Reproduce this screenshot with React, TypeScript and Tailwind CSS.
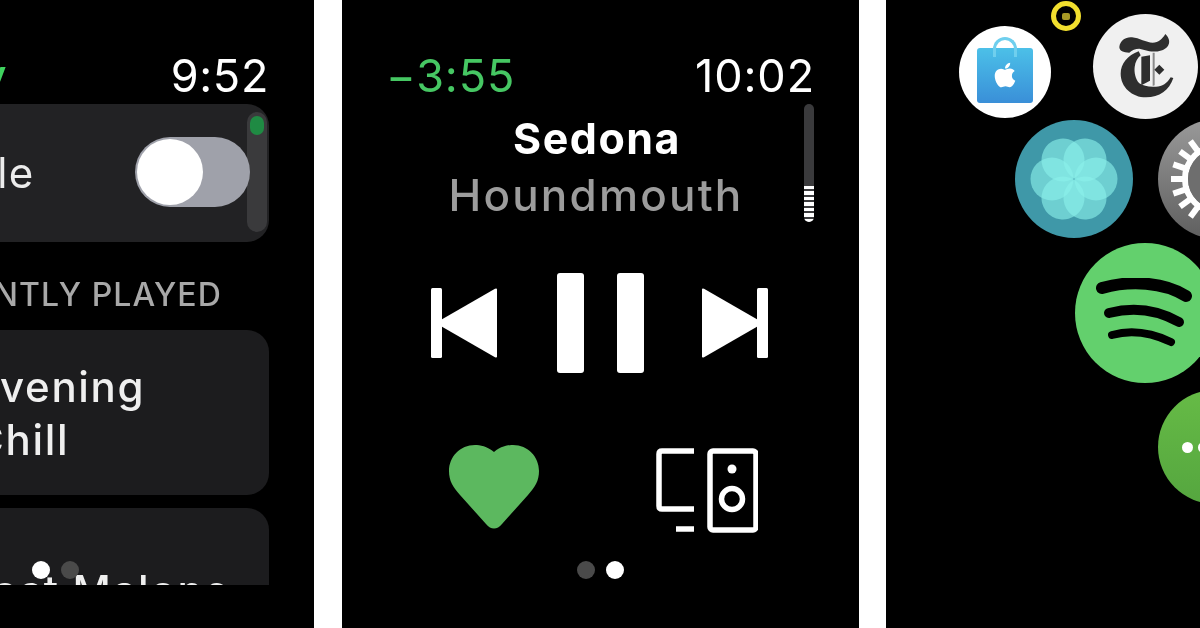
import { FaApple } from "react-icons/fa";

const font = "font-['Inter','Liberation_Sans',sans-serif]";

function PageDots({ active }: { active: 0 | 1 }) {
  return (
    <div className="flex items-center gap-[11px]">
      <span className={`h-[18px] w-[18px] rounded-full ${active === 0 ? "bg-white" : "bg-[#4a4a4a]"}`} />
      <span className={`h-[18px] w-[18px] rounded-full ${active === 1 ? "bg-white" : "bg-[#4a4a4a]"}`} />
    </div>
  );
}

function SpotifyHome() {
  return (
    <div className="relative h-full w-[314px] shrink-0 overflow-hidden bg-black">
      <div className="flex h-[585px] justify-end overflow-hidden pr-[45px]">
        <div className="flex w-[420px] shrink-0 flex-col pt-[47px]">
          <div className="flex h-[57px] shrink-0 items-start justify-between text-[45px] leading-[57px] tracking-[0.015em]">
            <span className="font-medium text-[#3fd35f]">Spotify</span>
            <span className="text-white">9:52</span>
          </div>
          <div className="relative flex h-[138px] shrink-0 items-center justify-between rounded-[22px] bg-[#222224] pb-[2px] pl-[36px] pr-[19px]">
            <span className="text-[42px] tracking-[0.03em] text-[#ececec]">Shuffle</span>
            <div className="relative z-10 h-[70px] w-[115px] rounded-full bg-[#9fa1aa]">
              <span className="absolute left-[2px] top-[2px] h-[66px] w-[66px] rounded-full bg-white" />
            </div>
            <div className="absolute right-[2px] top-[8px] h-[120px] w-[20px] rounded-full bg-[#3a3a3c]">
              <span className="absolute left-[3px] top-[4px] h-[19px] w-[14px] rounded-full bg-[#1f8a43]" />
            </div>
          </div>
          <div className="mt-[33px] h-[55px] shrink-0 whitespace-nowrap pr-[47px] text-right text-[32px] font-medium uppercase leading-[40px] tracking-[0.035em] text-[#a8a8a8]">
            Recently played
          </div>
          <div className="flex h-[165px] shrink-0 flex-col rounded-[22px] bg-[#1c1c1e] pl-[124px] pt-[30px] text-[42px] font-medium leading-[53px] tracking-[0.04em] text-[#efefef]">
            <span>Evening</span>
            <span>Chill</span>
          </div>
          <div className="mt-[13px] h-[130px] shrink-0 rounded-[22px] bg-[#1c1c1e] pl-[115px] pt-[56px] text-[42px] font-medium leading-[53px] tracking-[0.04em] text-[#efefef]">
            Post Malone
          </div>
        </div>
      </div>
      <div className="absolute left-[32px] top-[561px]">
        <PageDots active={0} />
      </div>
    </div>
  );
}

function NowPlaying() {
  return (
    <div className="relative flex h-full w-[517px] shrink-0 flex-col items-center bg-black pt-[47px]">
      <div className="flex h-[57px] w-full items-start justify-between pl-[44px] pr-[44px] text-[45px] leading-[57px] tracking-[0.02em]">
        <span className="text-[#46c763]">−3:55</span>
        <span className="text-white">10:02</span>
      </div>
      <div className="mt-[7px] pr-[7px] text-[43px] font-bold leading-[54px] tracking-[0.035em] text-white">Sedona</div>
      <div className="mt-[3px] pr-[9px] text-[44px] font-medium leading-[54px] tracking-[0.05em] text-[#9c9c9c]">Houndmouth</div>
      <div className="absolute right-[45px] top-[104px] flex h-[118px] w-[10px] flex-col justify-end gap-[2px] overflow-hidden rounded-full bg-[#3a3a3c]">
        {[0, 1, 2, 3, 4, 5, 6].map((i) => (
          <span key={i} className="h-[3.5px] w-full shrink-0 bg-white" />
        ))}
      </div>

      <div className="mt-[51px] flex h-[100px] items-center gap-[59px] pr-[3px]">
        <svg width="67" height="70" viewBox="0 0 67 70" fill="white">
          <rect x="0" y="0" width="11" height="70" rx="1.5" />
          <path d="M66 1.5 L66 68.5 Q66 70 64 69.2 L8 37 Q5 35 8 33 L64 .8 Q66 0 66 1.5Z" />
        </svg>
        <div className="flex h-[100px] gap-[33px]">
          <span className="h-full w-[27px] rounded-[3px] bg-white" />
          <span className="h-full w-[27px] rounded-[3px] bg-white" />
        </div>
        <svg className="-ml-[2px]" width="67" height="70" viewBox="0 0 67 70" fill="white">
          <rect x="56" y="0" width="11" height="70" rx="1.5" />
          <path d="M1 1.5 L1 68.5 Q1 70 3 69.2 L59 37 Q62 35 59 33 L3 .8 Q1 0 1 1.5Z" />
        </svg>
      </div>

      <div className="mt-[74px] flex h-[86px] items-start gap-[117px] pl-[6px]">
        <svg className="-mt-[2px]" width="90" height="84" viewBox="0 0 90 84" fill="#5cb85f">
          <path d="M45 7 C38 1 31 0 26 0 C11 0 0 12 0 26 C0 36 4 42 11 50 L37 79 C42 85 48 85 53 79 L79 50 C86 42 90 36 90 26 C90 12 79 0 64 0 C59 0 52 1 45 7Z" />
        </svg>
        <svg className="mt-[1px]" width="102" height="85" viewBox="0 0 102 85" fill="none" stroke="white" strokeWidth="5.5">
          <path d="M38 3 H6 Q3 3 3 6 V58 Q3 61 6 61 H38" />
          <path d="M20 81 H38" />
          <rect x="54" y="3" width="46" height="79" rx="3" />
          <circle cx="76" cy="21" r="4.500" fill="white" stroke="none" />
          <circle cx="76" cy="51" r="10.500" />
        </svg>
      </div>

      <div className="mt-[28px] pr-[1px]">
        <PageDots active={1} />
      </div>
    </div>
  );
}

function HomeScreen() {
  return (
    <div className="relative -ml-[1px] h-full w-[315px] shrink-0 overflow-hidden bg-black">
      {/* app bubbles, free placement on the honeycomb */}
      <div className="absolute left-[165px] top-[1px] flex h-[30px] w-[30px] items-center justify-center rounded-full border-[5px] border-[#f2df2e]">
        <span className="h-[7px] w-[8px] rounded-[2px] bg-[#a89a26]" />
      </div>

      <div className="absolute left-[73px] top-[26px] flex h-[92px] w-[92px] items-center justify-center rounded-full bg-white">
        <div className="relative mt-[6px] -ml-[1px] flex h-[55px] w-[56px] items-center justify-center rounded-[3px] bg-gradient-to-b from-[#4cc0e8] to-[#3a8fd8]">
          <span className="absolute left-[16px] top-[-11px] h-[20px] w-[24px] rounded-t-full border-[3px] border-b-0 border-[#6fcfee]" />
          <FaApple className="relative h-[28px] w-[28px] text-white" />
        </div>
      </div>

      <div className="absolute left-[207px] top-[14px] flex h-[105px] w-[105px] items-center justify-center rounded-full bg-[#f0f0f0]">
        <svg width="80" height="90" viewBox="0 0 240 270" fill="#2e2e2e">
          <path d="M40 75 C42 55 60 44 78 46 C100 48 120 62 140 62 C158 62 168 52 178 36 C190 48 194 62 184 74 C172 88 150 90 130 88 L100 80 C88 80 78 84 70 92 C52 92 40 86 40 75Z" />
          <path d="M98 88 C65 100 44 125 44 155 C44 195 78 226 120 226 C160 226 190 205 202 168 L194 166 C184 184 168 194 150 194 C130 196 112 192 100 184 C88 172 84 150 86 135 C88 120 94 108 104 100 Z" />
          <path d="M106 104 L132 100 L132 176 L106 190Z" />
          <path d="M140 92 L146 92 L146 190 L140 192Z" fill="#8a8a8a" />
          <path d="M160 128 L175 143 L160 158 L145 143Z" />
        </svg>
      </div>

      <div className="absolute left-[129px] top-[120px] flex h-[118px] w-[118px] items-center justify-center rounded-full bg-[#3f98a8]">
        <svg width="88" height="88" viewBox="-44 -44 88 88">
          {[0, 60, 120, 180, 240, 300].map((a) => (
            <circle key={a} cx="0" cy="-22" r="21.500" fill="#8af0ea" fillOpacity="0.62" transform={`rotate(${a + 30})`} />
          ))}
        </svg>
      </div>

      <div className="absolute left-[272px] top-[119px] flex h-[120px] w-[120px] items-center justify-center rounded-full bg-gradient-to-b from-[#9a9a9a] to-[#5f5f5f]">
        <svg width="100" height="100" viewBox="-50 -50 100 100">
          {Array.from({ length: 20 }, (_, i) => i * 18).map((a) => (
            <rect key={a} x="-3" y="-47" width="6" height="14" fill="white" transform={`rotate(${a})`} />
          ))}
          <circle r="33" fill="none" stroke="white" strokeWidth="6" />
          <circle r="30" fill="#6e6e6e" />
        </svg>
      </div>

      <div className="absolute left-[189px] top-[243px] flex h-[140px] w-[140px] items-center justify-center rounded-full bg-[#63d06d]">
        <svg width="102" height="70" viewBox="0 0 102 70" fill="none" stroke="#000" strokeLinecap="round">
          <path d="M8 10 C36 2 70 4 92 18" strokeWidth="12" />
          <path d="M15 35 C38 29 62 31 85 44" strokeWidth="10" />
          <path d="M18 57 C36 52 56 54 77 64" strokeWidth="8" />
        </svg>
      </div>

      <div className="absolute left-[272px] top-[390px] flex h-[114px] w-[114px] items-center gap-[5px] rounded-full bg-gradient-to-b from-[#66bb46] to-[#55a63f] pl-[24px]">
        <span className="h-[11px] w-[11px] rounded-full bg-white" />
        <span className="h-[11px] w-[11px] rounded-full bg-white" />
      </div>
    </div>
  );
}

export default function App() {
  return (
    <div className={`flex h-[628px] w-[1200px] gap-[28px] overflow-hidden bg-white blur-[0.4px] ${font}`}>
      <SpotifyHome />
      <NowPlaying />
      <HomeScreen />
    </div>
  );
}
